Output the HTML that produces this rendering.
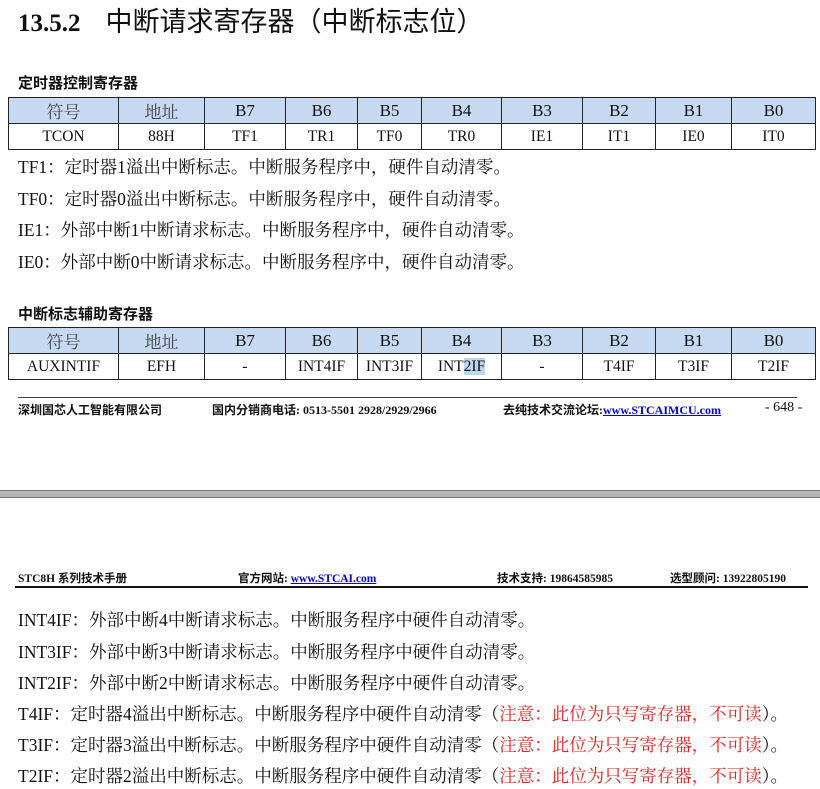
<!DOCTYPE html>
<html><head><meta charset="utf-8"><style>
body{margin:0;width:820px;height:789px;background:#fff;position:relative;overflow:hidden;font-family:"Liberation Serif","Noto Serif CJK SC",serif;color:#111}
.a{position:absolute;white-space:nowrap}
.t{font-size:17.5px;left:18px}
table{position:absolute;border-collapse:collapse;left:8px;width:807px;table-layout:fixed;font-family:"Liberation Serif","Noto Serif CJK SC",serif}
td{border:1px solid #222;text-align:center;padding:0;font-size:15.5px;height:25px}
tr.h td{background:#c6d9f1;font-size:17px}
.g{color:#444}
.h2{font-family:"Liberation Sans","Noto Sans CJK SC",sans-serif;font-weight:bold;font-size:15px;left:18px}
.f{font-size:12px;font-weight:bold;font-family:"Liberation Serif","Noto Sans CJK SC",serif}
a{color:#00c;text-decoration:underline}
.r{color:#e0201e}
</style></head><body>
<div class="a" style="left:18px;top:0px;font-size:25px;font-weight:bold;font-family:'Liberation Serif','Noto Sans CJK SC',serif">13.5.2&nbsp;&nbsp;&nbsp;&nbsp;<span style="font-weight:normal;font-size:27px;font-family:'Noto Sans CJK SC',sans-serif">中断请求寄存器（中断标志位）</span></div>
<div class="a h2" style="top:72px">定时器控制寄存器</div>
<table style="top:97px">
<colgroup><col style="width:110px"><col style="width:86px"><col style="width:81px"><col style="width:72px"><col style="width:64px"><col style="width:80px"><col style="width:81px"><col style="width:73px"><col style="width:76px"><col style="width:84px"></colgroup>
<tr class="h"><td class="g">符号</td><td class="g">地址</td><td>B7</td><td>B6</td><td>B5</td><td>B4</td><td>B3</td><td>B2</td><td>B1</td><td>B0</td></tr>
<tr><td>TCON</td><td>88H</td><td>TF1</td><td>TR1</td><td>TF0</td><td>TR0</td><td>IE1</td><td>IT1</td><td>IE0</td><td>IT0</td></tr>
</table>
<div class="a t" style="top:154px">TF1：定时器1溢出中断标志。中断服务程序中，硬件自动清零。</div>
<div class="a t" style="top:186px">TF0：定时器0溢出中断标志。中断服务程序中，硬件自动清零。</div>
<div class="a t" style="top:217px">IE1：外部中断1中断请求标志。中断服务程序中，硬件自动清零。</div>
<div class="a t" style="top:249px">IE0：外部中断0中断请求标志。中断服务程序中，硬件自动清零。</div>
<div class="a h2" style="top:303px">中断标志辅助寄存器</div>
<table style="top:327px">
<colgroup><col style="width:110px"><col style="width:86px"><col style="width:81px"><col style="width:72px"><col style="width:64px"><col style="width:80px"><col style="width:81px"><col style="width:73px"><col style="width:76px"><col style="width:84px"></colgroup>
<tr class="h"><td class="g">符号</td><td class="g">地址</td><td>B7</td><td>B6</td><td>B5</td><td>B4</td><td>B3</td><td>B2</td><td>B1</td><td>B0</td></tr>
<tr><td>AUXINTIF</td><td>EFH</td><td>-</td><td>INT4IF</td><td>INT3IF</td><td>INT<span style="background:#bcd6ee">2IF</span></td><td>-</td><td>T4IF</td><td>T3IF</td><td>T2IF</td></tr>
</table>
<div class="a" style="left:18px;top:397px;width:779px;border-top:1px solid #444"></div>
<div class="a f" style="left:18px;top:401px">深圳国芯人工智能有限公司</div>
<div class="a f" style="left:212px;top:401px">国内分销商电话: 0513-5501 2928/2929/2966</div>
<div class="a f" style="left:503px;top:401px">去纯技术交流论坛:<a>www.STCAIMCU.com</a></div>
<div class="a" style="left:765px;top:400px;font-size:14px">- 648 -</div>
<div class="a" style="left:0;top:490px;width:820px;height:8px;background:#b5b5b5;border-top:1px solid #777;border-bottom:1px solid #777;box-sizing:border-box"></div>
<div class="a f" style="left:18px;top:570px;font-size:11.5px">STC8H 系列技术手册</div>
<div class="a f" style="left:238px;top:570px;font-size:11.5px">官方网站: <a>www.STCAI.com</a></div>
<div class="a f" style="left:497px;top:570px;font-size:11.5px">技术支持: 19864585985</div>
<div class="a f" style="left:670px;top:570px;font-size:11.5px">选型顾问: 13922805190</div>
<div class="a" style="left:15px;top:586px;width:793px;border-top:2px solid #111"></div>
<div class="a t" style="top:607px">INT4IF：外部中断4中断请求标志。中断服务程序中硬件自动清零。</div>
<div class="a t" style="top:639px">INT3IF：外部中断3中断请求标志。中断服务程序中硬件自动清零。</div>
<div class="a t" style="top:670px">INT2IF：外部中断2中断请求标志。中断服务程序中硬件自动清零。</div>
<div class="a t" style="top:701px">T4IF：定时器4溢出中断标志。中断服务程序中硬件自动清零（<span class="r">注意：此位为只写寄存器，不可读</span>）。</div>
<div class="a t" style="top:732px">T3IF：定时器3溢出中断标志。中断服务程序中硬件自动清零（<span class="r">注意：此位为只写寄存器，不可读</span>）。</div>
<div class="a t" style="top:763px">T2IF：定时器2溢出中断标志。中断服务程序中硬件自动清零（<span class="r">注意：此位为只写寄存器，不可读</span>）。</div>
</body></html>
